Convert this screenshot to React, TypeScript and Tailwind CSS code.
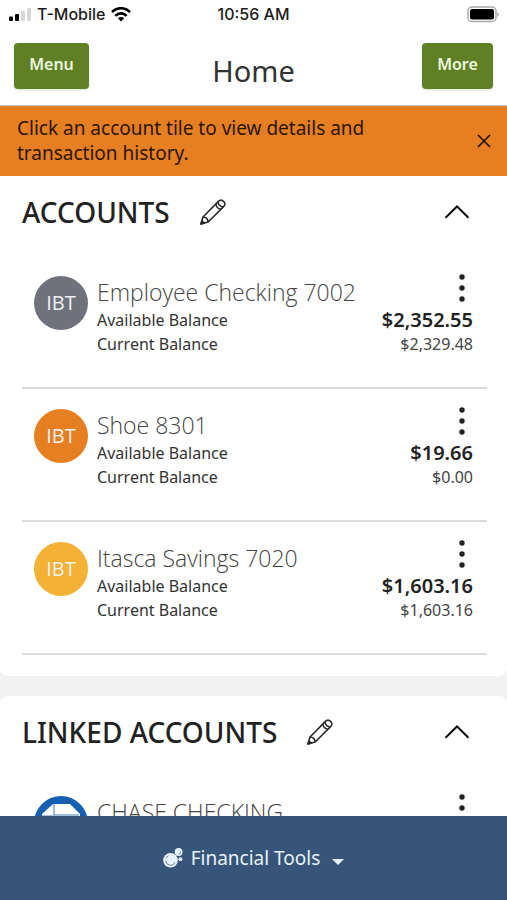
import { useState } from 'react';

interface Account {
    name: string;
    available: string;
    current: string;
    color: string;
    logo?: 'chase';
}

const accounts: Account[] = [
    { name: 'Employee Checking 7002', available: '$2,352.55', current: '$2,329.48', color: 'bg-[#6f727c]' },
    { name: 'Shoe 8301', available: '$19.66', current: '$0.00', color: 'bg-[#e67e22]' },
    { name: 'Itasca Savings 7020', available: '$1,603.16', current: '$1,603.16', color: 'bg-[#f3b234]' },
];

const linkedAccounts: Account[] = [
    { name: 'CHASE CHECKING', available: '', current: '', color: 'bg-[#1560b0]', logo: 'chase' },
];

function StatusBar() {
    return (
        <div className="grid grid-cols-3 items-center h-7 px-2 font-['Inter','Liberation_Sans',sans-serif] text-base font-medium text-[#1c1c1c]">
            <div className="flex items-center gap-1.5 whitespace-nowrap">
                <svg width="23" height="15" viewBox="0 0 23 15" aria-hidden="true">
                    <rect x="1" y="9.5" width="4" height="4.5" rx="1" fill="#000" />
                    <rect x="7" y="7" width="4" height="7" rx="1" fill="#000" />
                    <rect x="13" y="4" width="4" height="10" rx="1" fill="#d6d6d6" />
                    <rect x="19" y="1" width="4" height="13" rx="1" fill="#d6d6d6" />
                </svg>
                <span>T-Mobile</span>
                <svg width="20" height="15" viewBox="0 0 20 15" fill="none" stroke="#000" strokeWidth="2.6" aria-hidden="true">
                    <path d="M1 5.2C6-.1 14-.1 19 5.2" />
                    <path d="M4.3 8.8C7.6 5.5 12.4 5.5 15.7 8.8" />
                    <path d="M10 14.4 6.8 11.2C8.6 9.6 11.4 9.6 13.2 11.2Z" fill="#000" stroke="none" />
                </svg>
            </div>
            <div className="text-center whitespace-nowrap">10:56 AM</div>
            <svg className="justify-self-end" width="33" height="17" viewBox="0 0 33 17" aria-hidden="true">
                <rect x="2" y="1" width="28" height="14.5" rx="4" fill="#fff" stroke="#a9a9a9" strokeWidth="1.5" />
                <rect x="4" y="3" width="24" height="10.5" rx="2" fill="#000" />
                <path d="M31.3 6v5c2-1 2-4 0-5Z" fill="#a9a9a9" />
            </svg>
        </div>
    );
}

function PencilIcon() {
    return (
        <svg width="26" height="26" viewBox="0 0 26 26" fill="none" stroke="#2a2a2a" strokeWidth="1.6" strokeLinejoin="round" aria-hidden="true">
            <path d="M1 25 3 18 18.4 2.4Q21-.2 23.6 2.4 26.2 5 23.6 7.6L8.2 23Z" />
            <path d="M3 18Q7.8 18.2 8.2 23M15.8 5Q16.4 9.6 21 10.2M18 2.8Q18.4 7.4 23.2 8" />
            <path d="M1 25 1.9 21.8 4.3 24.1Z" fill="#2a2a2a" />
        </svg>
    );
}

function ChaseLogo() {
    return (
        <svg className="shrink-0" width="54" height="54" viewBox="0 0 54 54" aria-hidden="true">
            <circle cx="27" cy="27" r="27" fill="#1560b0" />
            <path d="M19 8H36L46 18V36L36 46H18L8 36V18Z" fill="#fff" />
            <path d="M20 8V19H45M46 34H34V20M34 46V34H9M8 20H20V33" fill="none" stroke="#1560b0" strokeWidth=".8" />
            <rect x="20" y="20" width="14" height="14" fill="#1560b0" />
        </svg>
    );
}

function AccountRow({ account }: { account: Account }) {
    return (
        <li className="flex border-b-2 border-[#dcdcdc] pt-5 pb-[31px] pl-3 pr-3.5">
            {account.logo ? (
                <ChaseLogo />
            ) : (
                <div className={`flex size-[54px] shrink-0 items-center justify-center rounded-full font-['Open_Sans','Noto_Sans',sans-serif] text-xl text-[#f1f1f1] ${account.color}`}>
                    IBT
                </div>
            )}
            <div className="ml-[9px] min-w-0 flex-1 text-[#333]">
                <h3 className="truncate font-['Open_Sans','Noto_Sans',sans-serif] text-[23px] leading-8 font-light text-[#444]">{account.name}</h3>
                <p className="text-base leading-6">Available Balance</p>
                <p className="text-base leading-6">Current Balance</p>
            </div>
            <div className="flex flex-col items-end">
                <button type="button" aria-label={`Options for ${account.name}`} className="-mt-0.5 flex h-[34px] w-[22px] justify-center">
                    <svg width="6" height="28" viewBox="0 0 6 28" fill="#222" aria-hidden="true">
                        <circle cx="3" cy="3" r="2.7" />
                        <circle cx="3" cy="14" r="2.7" />
                        <circle cx="3" cy="25" r="2.7" />
                    </svg>
                </button>
                <p className="text-xl leading-6 font-semibold text-[#222]">{account.available}</p>
                <p className="text-base leading-6 text-[#444]">{account.current}</p>
            </div>
        </li>
    );
}

function AccountSection({ title, items }: { title: string; items: Account[] }) {
    const [open, setOpen] = useState(true);

    return (
        <section className="rounded-lg bg-white pr-5 pb-[21px] pl-[22px] first:rounded-t-none">
            <div className="flex h-20 items-start pt-[18px]">
                <h2 className="text-[28px] leading-9 font-medium text-[#222]">{title}</h2>
                <button type="button" aria-label={`Edit ${title}`} className="ml-[30px] flex h-9 items-center">
                    <PencilIcon />
                </button>
                <button
                    type="button"
                    aria-label={`Toggle ${title}`}
                    onClick={() => setOpen(!open)}
                    className="mr-[17px] ml-auto flex h-9 items-center"
                >
                    <svg width="26" height="14" viewBox="0 0 26 14" fill="none" stroke="#111" strokeWidth="2" aria-hidden="true">
                        <path d="M1.5 12.8 13 1.5 24.5 12.8" />
                    </svg>
                </button>
            </div>
            {open && (
                <ul>
                    {items.map((account) => (
                        <AccountRow key={account.name} account={account} />
                    ))}
                </ul>
            )}
        </section>
    );
}

export default function App() {
    const [showTip, setShowTip] = useState(true);

    return (
        <div className="flex h-screen flex-col bg-[#f2f2f2] font-['Noto_Sans','Open_Sans',sans-serif]">
            <header className="border-b border-[#c4c4c4] bg-white">
                <StatusBar />
                <div className="grid grid-cols-3 items-start px-3.5 pt-[15px] pb-4">
                    <button type="button" className="h-[46px] w-[75px] rounded bg-[#5f8024] pb-1 text-base font-semibold text-[#eefbe0] shadow">
                        Menu
                    </button>
                    <h1 className="pt-2.5 text-center text-[29px] leading-9 text-[#333]">Home</h1>
                    <button type="button" className="h-[46px] w-[71px] justify-self-end rounded bg-[#5f8024] pb-1 text-base font-semibold text-[#eefbe0] shadow">
                        More
                    </button>
                </div>
            </header>

            <main className="min-h-0 flex-1 overflow-y-auto [scrollbar-width:none]">
                {showTip && (
                    <div className="flex items-center justify-between bg-[#e67e22] py-2.5 pr-4 pl-[17px]">
                        <p className="max-w-[400px] text-[19px] leading-[25px] text-[#2c1705]">
                            Click an account tile to view details and transaction history.
                        </p>
                        <button type="button" aria-label="Dismiss" onClick={() => setShowTip(false)}>
                            <svg width="14" height="14" viewBox="0 0 14 14" stroke="#1c0f03" strokeWidth="1.6" aria-hidden="true">
                                <path d="M1 1 13 13M13 1 1 13" />
                            </svg>
                        </button>
                    </div>
                )}
                <div className="flex flex-col gap-5">
                    <AccountSection title="ACCOUNTS" items={accounts} />
                    <AccountSection title="LINKED ACCOUNTS" items={linkedAccounts} />
                </div>
            </main>

            <footer className="bg-[#375579]">
                <button type="button" className="flex h-[84px] w-full items-center justify-center text-[19px] text-[#e6f2fc]">
                    <svg width="20" height="20" viewBox="0 0 20 20" aria-hidden="true">
                        <circle cx="7.5" cy="12.3" r="7.3" fill="#e6f2fc" />
                        <path d="M2.6 12.8A4.9 4.9 0 0 0 12 14.2M3 10.2A4.9 4.9 0 0 1 5.5 7.8" fill="none" stroke="#375579" strokeWidth=".7" />
                        <circle cx="15.6" cy="4" r="3.9" fill="#e6f2fc" />
                        <path d="M15.8 6.2A2.3 2.3 0 0 0 17.8 3.5" fill="none" stroke="#375579" strokeWidth=".7" />
                        <circle cx="17.4" cy="11.2" r="2" fill="#e6f2fc" />
                    </svg>
                    <span className="ml-2">Financial Tools</span>
                    <svg className="mt-2 ml-3" width="12" height="6" viewBox="0 0 12 6" fill="#e6f2fc" aria-hidden="true">
                        <path d="M0 0H12L6 6Z" />
                    </svg>
                </button>
            </footer>
        </div>
    );
}
